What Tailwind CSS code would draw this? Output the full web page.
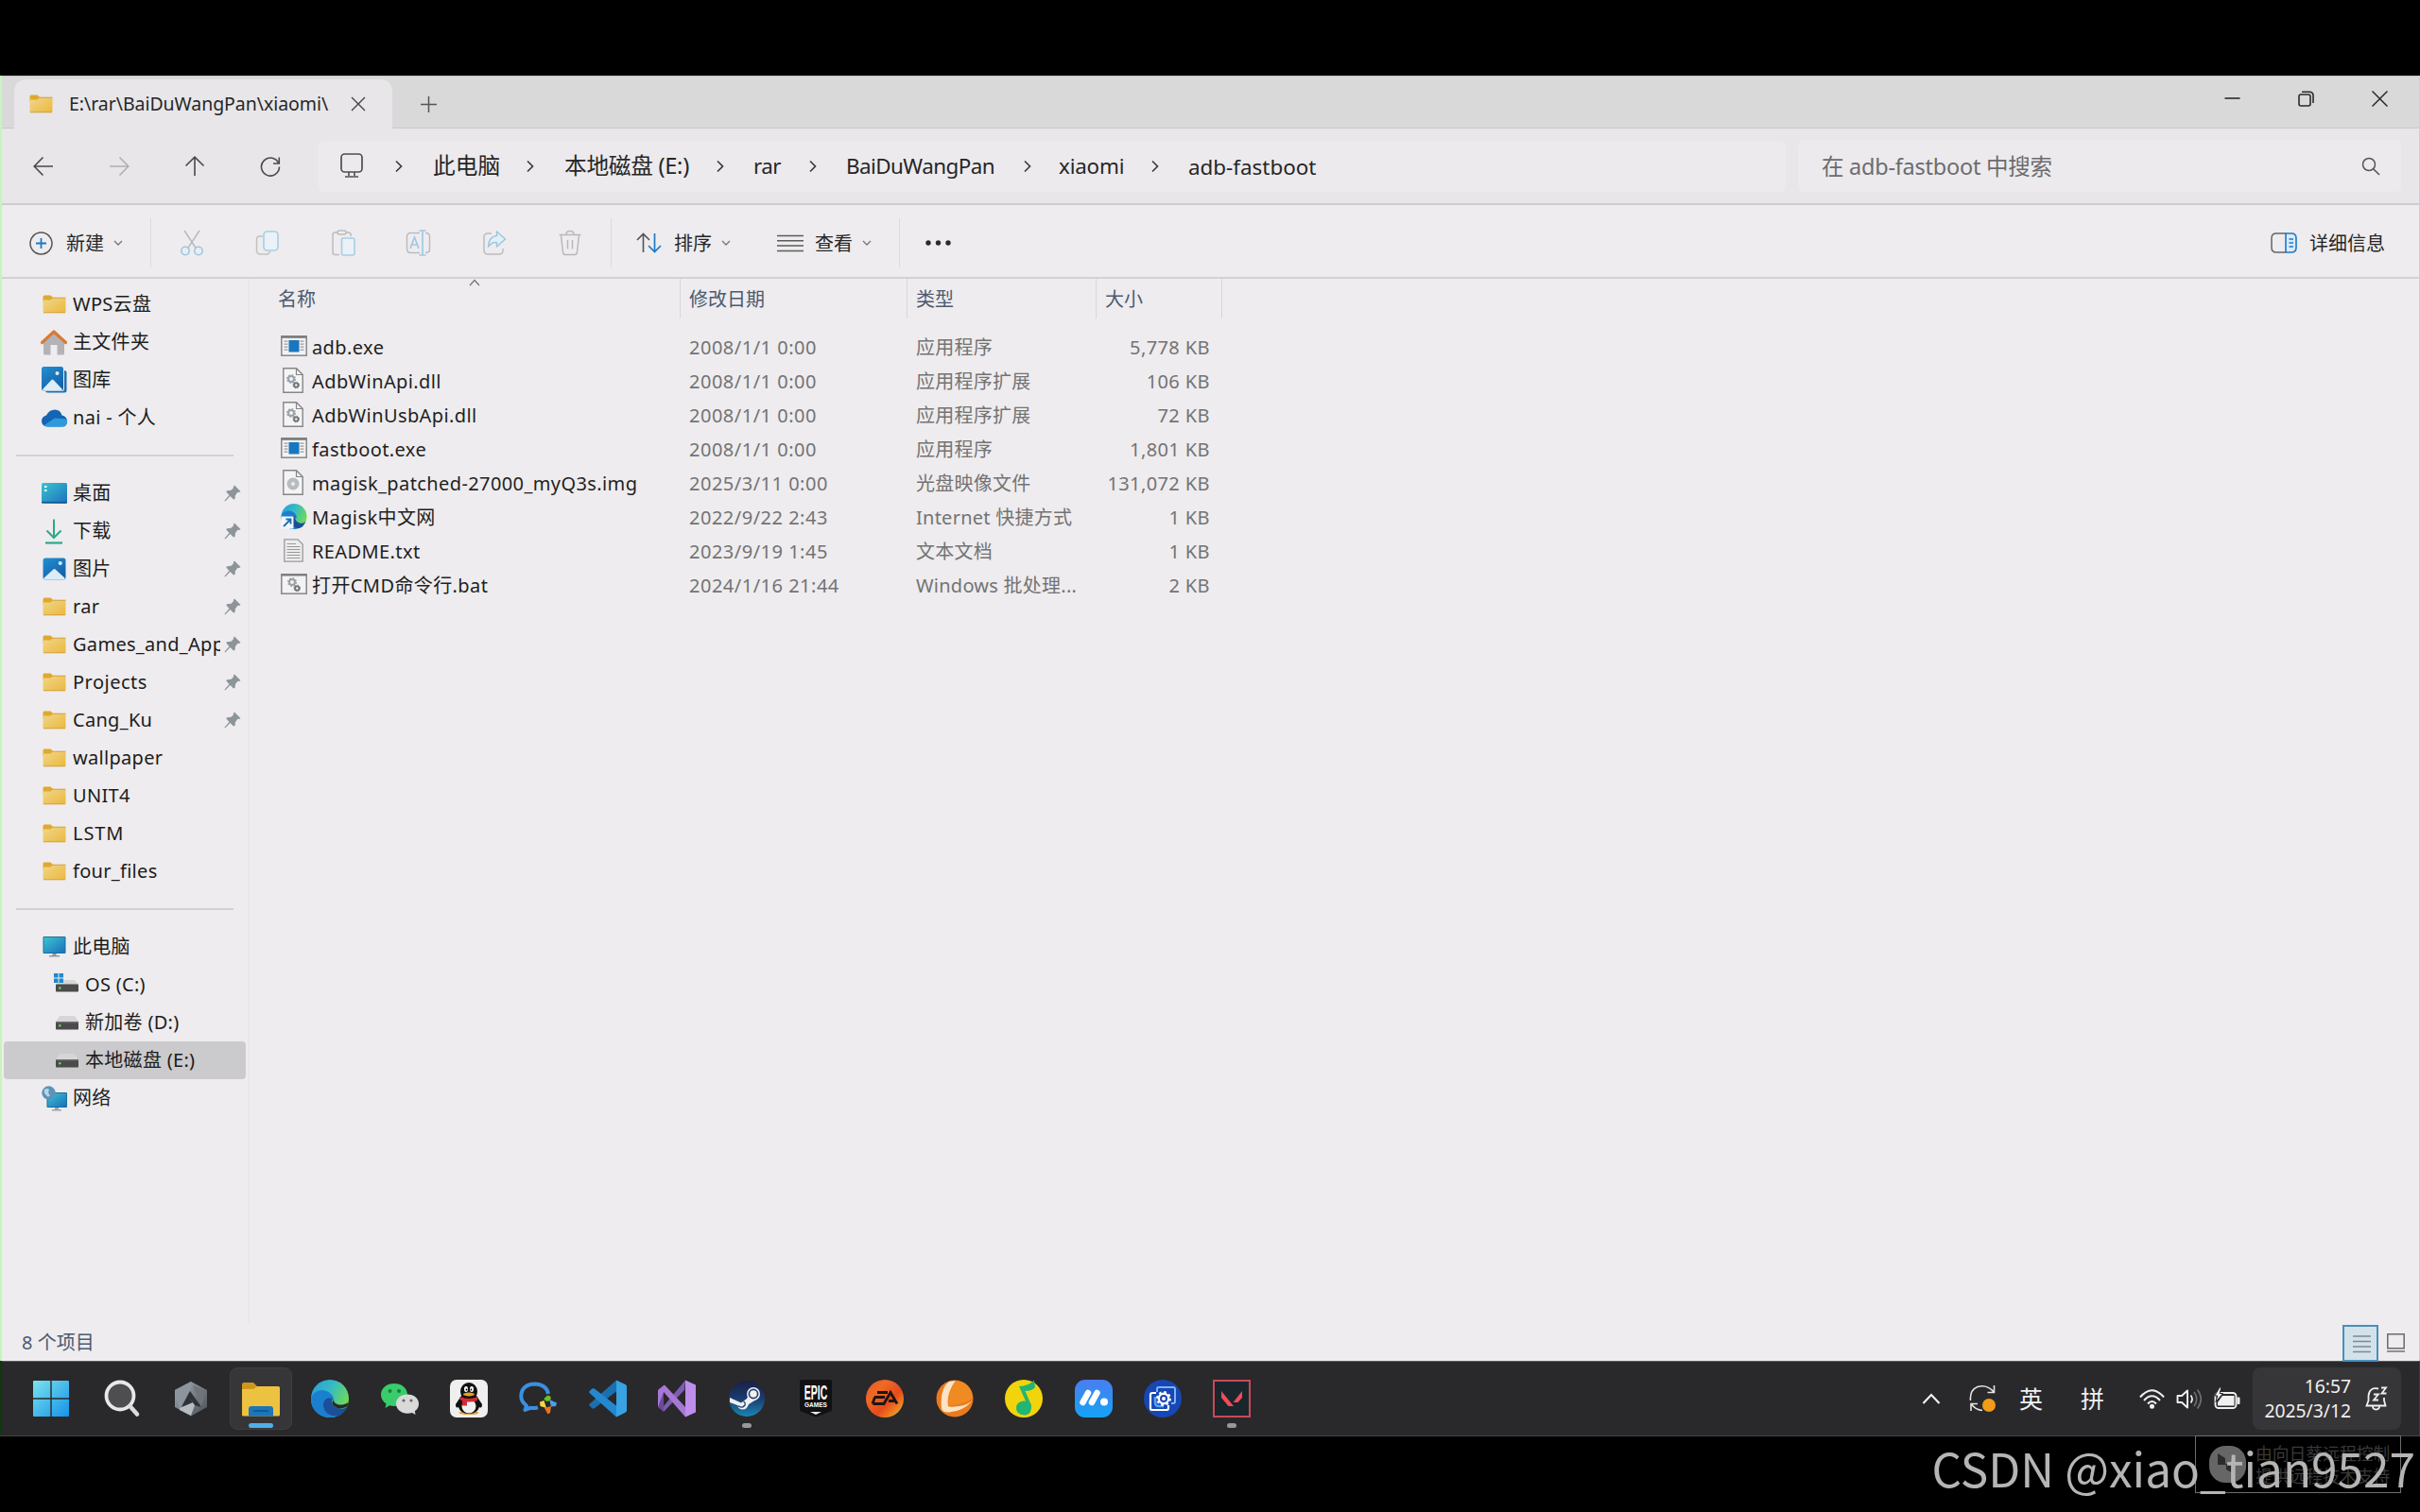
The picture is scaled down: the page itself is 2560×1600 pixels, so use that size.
<!DOCTYPE html>
<html lang="zh-CN">
  <head>
    <meta charset="UTF-8" />
    <title>adb-fastboot</title>
    <script src="https://cdn.jsdelivr.net/npm/@tailwindcss/browser@4"></script>
  </head>
  <body class="bg-black font-['Noto_Sans','Noto_Sans_CJK_SC',sans-serif]">
    <!-- shared icons -->
    <svg class="absolute w-0 h-0">
      <defs>
        <linearGradient id="g-folder" x1="0" y1="0" x2="1" y2="1"><stop offset="0" stop-color="#f0d68c" /><stop offset="1" stop-color="#ebb93c" /></linearGradient>
        <linearGradient id="g-blue" x1="0" y1="0" x2="0.6" y2="1"><stop offset="0" stop-color="#2390d2" /><stop offset="1" stop-color="#1560a8" /></linearGradient>
        <linearGradient id="g-teal" x1="0" y1="0" x2="1" y2="1"><stop offset="0" stop-color="#3cc4d0" /><stop offset="1" stop-color="#1a6fbd" /></linearGradient>
        <linearGradient id="g-win" x1="0" y1="0" x2="1" y2="1"><stop offset="0" stop-color="#7be3ee" /><stop offset="1" stop-color="#1593e8" /></linearGradient>
        <linearGradient id="g-edge" x1="0" y1="0" x2="1" y2="0.5"><stop offset="0" stop-color="#2a9bdc" /><stop offset="0.5" stop-color="#35b9c6" /><stop offset="1" stop-color="#6edb55" /></linearGradient>
        <linearGradient id="g-ea" x1="0" y1="0" x2="1" y2="1"><stop offset="0" stop-color="#e8562a" /><stop offset="0.3" stop-color="#ee6a24" /><stop offset="0.6" stop-color="#e64a1c" /><stop offset="1" stop-color="#f3c02c" /></linearGradient>
        <linearGradient id="g-steam" x1="0" y1="0" x2="0" y2="1"><stop offset="0" stop-color="#1b1f47" /><stop offset="0.5" stop-color="#1a3c6e" /><stop offset="1" stop-color="#1a86b4" /></linearGradient>
        <linearGradient id="g-m" x1="0" y1="0" x2="0" y2="1"><stop offset="0" stop-color="#4a7df0" /><stop offset="1" stop-color="#14a4f4" /></linearGradient>
        <linearGradient id="g-gray" x1="0" y1="0" x2="1" y2="1"><stop offset="0" stop-color="#a3abb2" /><stop offset="1" stop-color="#4a4f55" /></linearGradient>
        <symbol id="folder" viewBox="0 0 24 20">
          <path d="M0 2Q0 0.5 1.5 0.5H8L10.5 3V8H0Z" fill="#dfa92c" />
          <path d="M0 5.5H8L10.5 3H23Q24 3 24 4V18Q24 19 23 19H1Q0 19 0 18Z" fill="url(#g-folder)" />
          <path d="M9.5 3.2H24M0.5 18.8H23.5" stroke="#d29a3a" stroke-width="0.9" />
        </symbol>
        <symbol id="pin" viewBox="0 0 18 18">
          <path d="M11 0.5L17.5 7L16 8L14.5 7.8L12 11L11.5 15L10 15.5L6.5 12L1.5 17.3L0.6 17.3L0.6 16.4L5.5 11L2.3 7.5L3 6.2L7.5 5.8L10 3.3L9.8 2Z" fill="#8d959b" />
        </symbol>
        <symbol id="picture" viewBox="0 0 24 24" preserveAspectRatio="none">
          <rect x="0.5" y="0.5" width="23" height="23" rx="2.5" fill="url(#g-blue)" />
          <path d="M1 22L11 12.5Q12 11.7 13 12.500L23 22Q22 23.500 21 23.500H3Q1.500 23.500 1 22Z" fill="#dcecf8" />
          <circle cx="18" cy="6" r="2" fill="#dcecf8" />
        </symbol>
        <symbol id="drive" viewBox="0 0 24 15">
          <path d="M4 0H20L24 6H0Z" fill="#d6d6d6" />
          <rect x="0" y="6" width="24" height="8.5" rx="0.8" fill="#4b4b4b" />
          <rect x="0" y="6" width="24" height="1.4" fill="#707070" />
          <circle cx="4.3" cy="10.3" r="1.2" fill="#5fe05a" />
        </symbol>
        <symbol id="monitor" viewBox="0 0 24 22">
          <path d="M10 17H14V20H17.5V21.5H6.5V20H10Z" fill="#8c98a0" />
          <rect x="0" y="0" width="24" height="18" rx="1" fill="#1c6f9c" />
          <rect x="1" y="1" width="22" height="16" fill="url(#g-teal)" />
        </symbol>
        <symbol id="exe" viewBox="0 0 28 22">
          <rect x="0.8" y="0.8" width="26.4" height="20.4" fill="#f3f3f3" stroke="#868686" stroke-width="1.5" />
          <path d="M0.8 1.7H27.2" stroke="#7a7a7a" stroke-width="2.2" />
          <path d="M3.5 6.2H7.5M3.5 9.2H7.5M3.5 12.2H7.5M3.5 15.2H7.5M20.5 6.2H24.5M20.5 9.2H24.5M20.5 12.2H24.5M20.5 15.2H24.5" stroke="#9a9a9a" stroke-width="1.2" />
          <rect x="8.5" y="5" width="11" height="12.5" fill="#1977bf" />
        </symbol>
        <symbol id="page" viewBox="0 0 22 27">
          <path d="M0.8 0.8H14.5L21.2 7.5V26.2H0.8Z" fill="#f4f4f4" stroke="#868686" stroke-width="1.4" />
          <path d="M14.5 0.8V7.5H21.2" fill="none" stroke="#868686" stroke-width="1.2" />
        </symbol>
        <symbol id="gears" viewBox="0 0 14 16">
          <circle cx="5" cy="5" r="3" fill="none" stroke="#9aa0a6" stroke-width="2" />
          <circle cx="5" cy="5" r="4.4" fill="none" stroke="#9aa0a6" stroke-width="1.3" stroke-dasharray="1.7 1.75" />
          <circle cx="10.3" cy="11.5" r="2.2" fill="none" stroke="#6c7278" stroke-width="1.8" />
          <circle cx="10.3" cy="11.5" r="3.3" fill="none" stroke="#6c7278" stroke-width="1" stroke-dasharray="1.3 1.3" />
        </symbol>
        <symbol id="edge" viewBox="0 0 40 40">
          <circle cx="20" cy="20" r="20" fill="url(#g-edge)" />
          <path d="M0.2 19C3 11 12 10 17.5 12.5C22 14.6 25 19 24 23C19 16 11 21 13 29C14.5 35.5 21 38.5 27 38.7C22 41 13 40.5 7 35.5C1 30.5 -0.5 24.5 0.2 19Z" fill="#1b7fd0" />
          <path d="M13 29C11.5 21 18 17 22.5 20.5C21 24 23 28 28 30C32 31.5 36 31 38.5 27.5C36 35 31 38.5 27 38.7C20 38.5 14.5 35.5 13 29Z" fill="#1b4f9b" />
        </symbol>
        <symbol id="chev-r" viewBox="0 0 10 16"><path d="M2 2.5L7.5 8L2 13.5" fill="none" stroke="#3c3c3c" stroke-width="1.7" /></symbol>
        <symbol id="chev-d" viewBox="0 0 10 8"><path d="M1 2L5 6L9 2" fill="none" stroke="#777" stroke-width="1.3" /></symbol>
      </defs>
    </svg>

    <div class="relative w-[2560px] h-[1600px] overflow-hidden pt-20">
      <!-- Explorer window -->
      <div class="h-[1360px] bg-[#eeecee] flex flex-col text-[20px] text-[#262626]">
        <!-- Tab strip -->
        <div class="h-[56px] bg-[#d9d9d9] border-t border-[#c4c4c4] flex shrink-0 shadow-[inset_0_-1px_0_#c9c8ca]">
          <div class="ml-[15px] mt-[3px] w-[400px] h-[52px] rounded-t-xl bg-[#e8e6e9] flex items-center pl-4">
            <svg class="w-[25px] h-[20px]"><use href="#folder" /></svg>
            <span class="ml-[17px] w-[287px] text-[19.5px] whitespace-nowrap leading-none tracking-[-0.05px]">E:\rar\BaiDuWangPan\xiaomi\</span>
            <svg class="ml-[11px] w-[16px] h-[16px]" viewBox="0 0 16 16"><path d="M1 1L15 15M15 1L1 15" stroke="#444" stroke-width="1.4" /></svg>
          </div>
          <svg class="ml-[30px] mt-[21px] w-[17px] h-[17px]" viewBox="0 0 17 17"><path d="M8.5 0V17M0 8.5H17" stroke="#555" stroke-width="1.5" /></svg>
          <div class="ml-auto mr-[34px] mt-[14px] h-[18px] flex items-center gap-[61px]">
            <svg class="w-[17px] h-[17px]" viewBox="0 0 17 17"><path d="M0.5 8H16.5" stroke="#2a2a2a" stroke-width="1.6" /></svg>
            <svg class="w-[17px] h-[17px]" viewBox="0 0 17 17"><rect x="1" y="4" width="12" height="12" rx="2" fill="none" stroke="#2a2a2a" stroke-width="1.6" /><path d="M4 1.2H12Q16 1.2 16 5V13" fill="none" stroke="#2a2a2a" stroke-width="1.6" /></svg>
            <svg class="w-[17px] h-[17px]" viewBox="0 0 17 17"><path d="M0.5 0.5L16.5 16.5M16.5 0.5L0.5 16.5" stroke="#2a2a2a" stroke-width="1.5" /></svg>
          </div>
        </div>

        <!-- Navigation + address bar -->
        <div class="h-[81px] bg-[#e8e6e9] border-b-2 border-[#cecdd0] flex items-center shrink-0">
          <div class="w-[337px] flex items-center pl-[35px] pt-px gap-[58px]">
            <svg class="w-[22px] h-[22px]" viewBox="0 0 22 22"><path d="M21 11H1.5M10.5 1.5L1.2 11L10.5 20.5" fill="none" stroke="#4a4a4a" stroke-width="1.6" /></svg>
            <svg class="w-[22px] h-[22px]" viewBox="0 0 22 22"><path d="M1 11H20.5M11.5 1.5L20.8 11L11.5 20.5" fill="none" stroke="#b0afb1" stroke-width="1.6" /></svg>
            <svg class="w-[22px] h-[22px]" viewBox="0 0 22 22"><path d="M11 21V1.5M1.5 10.5L11 1.2L20.5 10.5" fill="none" stroke="#4a4a4a" stroke-width="1.6" /></svg>
            <svg class="w-[22px] h-[22px]" viewBox="0 0 22 22"><path d="M19.8 8A9.5 9.5 0 1 0 20.5 11.5M20.3 1.5V8H14" fill="none" stroke="#4a4a4a" stroke-width="1.6" /></svg>
          </div>
          <div class="w-[1552px] h-[54px] rounded-md bg-[#eceaed] grid grid-cols-[57px_41px_98px_41px_160px_40px_58px_40px_187px_38px_97px_40px_auto] items-center pl-[23px] pt-px text-[22.4px] leading-none whitespace-nowrap">
            <svg class="w-[24px] h-[26px] mt-[-3px]" viewBox="0 0 24 26"><rect x="1" y="1" width="22" height="19" rx="3.5" fill="none" stroke="#4f4f4f" stroke-width="1.7" /><path d="M9 20V24M15 20V24M5 25H19" stroke="#4f4f4f" stroke-width="1.6" /></svg>
            <svg class="w-[10px] h-[16px]"><use href="#chev-r" /></svg>
            <span class="text-[23.7px]">此电脑</span>
            <svg class="w-[10px] h-[16px]"><use href="#chev-r" /></svg>
            <span class="text-[23.7px] tracking-[-0.3px]">本地磁盘 (E:)</span>
            <svg class="w-[10px] h-[16px]"><use href="#chev-r" /></svg>
            <span class="tracking-[-0.5px]">rar</span>
            <svg class="w-[10px] h-[16px]"><use href="#chev-r" /></svg>
            <span class="tracking-[-0.55px]">BaiDuWangPan</span>
            <svg class="w-[10px] h-[16px]"><use href="#chev-r" /></svg>
            <span class="tracking-[-0.2px]">xiaomi</span>
            <svg class="w-[10px] h-[16px]"><use href="#chev-r" /></svg>
            <span class="pt-[2px]">adb-fastboot</span>
          </div>
          <div class="ml-[13px] w-[638px] h-[55px] rounded-md bg-[#eceaed] flex items-center justify-between pl-[25px] pr-[22px] text-[23.5px] leading-none text-[#6c6c6e]">
            <span class="pt-[2px] tracking-[-0.25px]">在 adb-fastboot 中搜索</span>
            <svg class="w-[20px] h-[20px]" viewBox="0 0 20 20"><circle cx="8" cy="8" r="6.5" fill="none" stroke="#555" stroke-width="1.5" /><path d="M12.7 12.7L19 19" stroke="#555" stroke-width="1.6" /></svg>
          </div>
        </div>

        <!-- Command bar -->
        <div class="h-[78px] border-b-2 border-[#d3d1d4] flex items-center shrink-0 leading-none text-[20px] whitespace-nowrap pt-[4px]">
          <div class="w-[159px] flex items-center pl-[31px]">
            <svg class="w-[25px] h-[25px]" viewBox="0 0 25 25"><circle cx="12.5" cy="12.5" r="11.5" fill="none" stroke="#555" stroke-width="1.5" /><path d="M12.5 7V18M7 12.5H18" stroke="#1d79c8" stroke-width="1.8" /></svg>
            <span class="ml-[14px] w-[50px] pt-px">新建</span>
            <svg class="w-[10px] h-[8px]"><use href="#chev-d" /></svg>
          </div>
          <div class="w-[488px] h-[52px] border-x border-[#dcdadd] flex items-center pl-[30px] gap-[53.8px]">
            <svg class="w-[26px] h-[28px] shrink-0" viewBox="0 0 26 28"><path d="M5 1L17.5 20M21 1L8.5 20" stroke="#b9b9bb" stroke-width="1.5" /><circle cx="6" cy="22.5" r="4.2" fill="none" stroke="#9cc7e4" stroke-width="1.6" /><circle cx="20" cy="22.5" r="4.2" fill="none" stroke="#9cc7e4" stroke-width="1.6" /></svg>
            <svg class="w-[26px] h-[28px] shrink-0" viewBox="0 0 26 28"><path d="M8 7H5Q1.5 7 1.5 10.5V22Q1.5 26 5.5 26H12Q15 26 15.5 23" fill="none" stroke="#c2c2c4" stroke-width="1.5" /><rect x="9" y="2" width="15" height="20" rx="3.5" fill="#eaf1f7" stroke="#a8cde6" stroke-width="1.6" /></svg>
            <svg class="w-[26px] h-[28px] shrink-0" viewBox="0 0 26 28"><path d="M9 26.5H4.5Q2 26.5 2 24V5.5Q2 3 4.5 3H18.5Q21 3 21 5.5V7" fill="none" stroke="#bcbcbe" stroke-width="1.5" /><rect x="7" y="1" width="9" height="4" rx="2" fill="#eeecee" stroke="#bcbcbe" stroke-width="1.5" /><rect x="11.5" y="9" width="13.5" height="18" rx="2" fill="#eaf1f7" stroke="#a8cde6" stroke-width="1.6" /></svg>
            <svg class="w-[27px] h-[28px] shrink-0" viewBox="0 0 27 28"><path d="M15 3.5H5.5Q1.5 3.5 1.5 7.5V20.5Q1.5 24.5 5.5 24.5H15M21 3.5Q25.5 3.5 25.5 7.5V20.5Q25.5 24.5 21 24.5" fill="none" stroke="#bcbcbe" stroke-width="1.5" /><path d="M18 1V27M14.5 1H21.5M14.5 27H21.5" stroke="#9cc7e4" stroke-width="1.6" /><path d="M5 20L9.5 8L14 20M6.5 16H12.5" fill="none" stroke="#9cc7e4" stroke-width="1.6" /></svg>
            <svg class="w-[26px] h-[28px] shrink-0" viewBox="0 0 26 28"><path d="M10 4H6Q2 4 2 8V22Q2 26 6 26H18Q22 26 22 22V20" fill="none" stroke="#bcbcbe" stroke-width="1.5" /><path d="M15.5 2L24.5 10L15.5 18V13.5Q10 13 6.5 18Q7 7.5 15.5 6.5Z" fill="#e4eff7" stroke="#9cc7e4" stroke-width="1.5" stroke-linejoin="round" /></svg>
            <svg class="w-[26px] h-[28px] shrink-0" viewBox="0 0 26 28"><path d="M1.5 5.5H24.5M9 5Q9 1.5 13 1.5Q17 1.5 17 5M3.5 6L5.5 24Q6 26.5 8 26.5H18Q20 26.5 20.5 24L22.5 6M10.5 11V20.5M15.5 11V20.5" fill="none" stroke="#b9b9bb" stroke-width="1.5" /></svg>
          </div>
          <div class="w-[305px] h-[52px] border-r border-[#dcdadd] flex items-center pl-[26px]">
            <svg class="w-[27px] h-[22px]" viewBox="0 0 27 22"><path d="M7.5 21V1.5M1 8L7.5 1.5L14 8" fill="none" stroke="#555" stroke-width="1.6" /><path d="M19.5 1V20.5M13 14L19.5 20.5L26 14" fill="none" stroke="#1d79c8" stroke-width="1.7" /></svg>
            <span class="ml-[13px] w-[50px] pt-px">排序</span>
            <svg class="w-[10px] h-[8px]"><use href="#chev-d" /></svg>
            <svg class="ml-[49px] w-[28px] h-[19px]" viewBox="0 0 28 19"><path d="M0 1.5H28M0 6.8H28M0 12.1H28M0 17.4H28" stroke="#5c5c5c" stroke-width="1.5" /></svg>
            <span class="ml-[12px] w-[50px] pt-px">查看</span>
            <svg class="w-[10px] h-[8px]"><use href="#chev-d" /></svg>
          </div>
          <svg class="ml-[26px] w-[30px] h-[6px]" viewBox="0 0 30 6"><circle cx="4" cy="3" r="2.7" fill="#2a2a2a" /><circle cx="14.5" cy="3" r="2.7" fill="#2a2a2a" /><circle cx="25" cy="3" r="2.7" fill="#2a2a2a" /></svg>
          <div class="ml-auto mr-[37px] flex items-center gap-[13px]">
            <svg class="w-[28px] h-[22px]" viewBox="0 0 28 22"><path d="M16 1H6Q1 1 1 6V16Q1 21 6 21H16" fill="none" stroke="#666" stroke-width="1.5" /><path d="M16 1H22Q27 1 27 6V16Q27 21 22 21H16Z" fill="#d9ebf8" stroke="#1d79c8" stroke-width="1.6" /><path d="M19.5 7H24M19.5 11H24M19.5 15H24" stroke="#1d79c8" stroke-width="1.4" /></svg>
            <span class="pt-px">详细信息</span>
          </div>
        </div>

        <!-- Body -->
        <div class="flex flex-1 min-h-0">
          <div class="w-[264px] h-[1107px] border-r border-[#e4e2e5] pt-[7px] shrink-0 leading-none whitespace-nowrap text-[#1c1c1c] tracking-[0.3px]">
            <div class="h-10 flex items-center pl-[45px]"><svg class="w-[25px] h-[20px] mr-[7px]"><use href="#folder" /></svg>WPS云盘</div>
            <div class="h-10 flex items-center pl-[43px]">
              <svg class="w-[28px] h-[27px] mr-[6px]" viewBox="0 0 28 27"><path d="M3 12L14 2L25 12V25Q25 26.5 23.5 26.5H17.5V16H10.5V26.5H4.5Q3 26.5 3 25Z" fill="#b3b3b6" /><path d="M1.5 13.5L14 2L26.5 13.5" fill="none" stroke="#d87a35" stroke-width="3.2" stroke-linejoin="round" stroke-linecap="round" /></svg>主文件夹
            </div>
            <div class="h-10 flex items-center pl-[44px]">
              <svg class="w-[27px] h-[28px] mr-[6px]" viewBox="0 0 27 28"><rect x="4" y="4" width="22.5" height="23.5" rx="2.5" fill="#1f6fae" /><rect x="0" y="0" width="24" height="26" rx="2.5" fill="#eeecee" /><rect x="0" y="0" width="23" height="25.5" rx="2.5" fill="url(#g-blue)" /><path d="M1 24L10.5 14Q11.5 13 12.5 14L22 24Q21.5 25.5 20 25.5H3Q1.5 25.5 1 24Z" fill="#dcecf8" /><circle cx="16.5" cy="7" r="2" fill="#dcecf8" /></svg>图库
            </div>
            <div class="h-10 flex items-center pl-[44px]">
              <svg class="w-[27px] h-[19px] mr-[6px]" viewBox="0 0 27 19"><path d="M6.5 18.5Q0 18 0 12.5Q0 8 5 6.5Q8 0.5 14 0.5Q20 0.5 21.5 6.5Q27 7.5 27 13Q27 18.5 21.5 18.5Z" fill="#1466b4" /><path d="M2.5 17L14 9.5L26.5 10.5Q28 18.5 21.5 18.5H6.5Q4 18.5 2.5 17Z" fill="#2e9ade" /></svg>nai - 个人
            </div>
            <div class="h-10 flex items-center"><div class="ml-[17px] w-[230px] h-[2px] bg-[#d2d0d3]"></div></div>
            <div class="h-10 flex items-center pl-[44px] pr-[8px]">
              <svg class="w-[27px] h-[22px] mr-[6px]" viewBox="0 0 27 22"><rect width="27" height="22" rx="1.5" fill="url(#g-teal)" /><path d="M3 4H5.5M3 8H5.5" stroke="#e8ffff" stroke-width="2" /><path d="M0 20.5H27" stroke="#17588f" stroke-width="1.2" /></svg>桌面
              <svg class="ml-auto w-[18px] h-[18px]"><use href="#pin" /></svg>
            </div>
            <div class="h-10 flex items-center pl-[47px] pr-[8px]">
              <svg class="w-[20px] h-[27px] mr-[10px]" viewBox="0 0 20 27"><path d="M10 0.5V20M2.5 12.5L10 20L17.5 12.5" fill="none" stroke="#2aa98a" stroke-width="2" /><path d="M1 25.5H19" stroke="#2aa98a" stroke-width="2.2" /></svg>下载
              <svg class="ml-auto w-[18px] h-[18px]"><use href="#pin" /></svg>
            </div>
            <div class="h-10 flex items-center pl-[45px] pr-[8px]"><svg class="w-[25px] h-[24px] mr-[7px]"><use href="#picture" /></svg>图片<svg class="ml-auto w-[18px] h-[18px]"><use href="#pin" /></svg></div>
            <div class="h-10 flex items-center pl-[45px] pr-[8px]"><svg class="w-[25px] h-[20px] mr-[7px]"><use href="#folder" /></svg>rar<svg class="ml-auto w-[18px] h-[18px]"><use href="#pin" /></svg></div>
            <div class="h-10 flex items-center pl-[45px] pr-[8px]"><svg class="w-[25px] h-[20px] mr-[7px] shrink-0"><use href="#folder" /></svg><span class="w-[156px] overflow-hidden leading-[30px]">Games_and_Apps</span><svg class="ml-auto w-[18px] h-[18px] shrink-0"><use href="#pin" /></svg></div>
            <div class="h-10 flex items-center pl-[45px] pr-[8px]"><svg class="w-[25px] h-[20px] mr-[7px]"><use href="#folder" /></svg><span class="tracking-[0.5px]">Projects</span><svg class="ml-auto w-[18px] h-[18px]"><use href="#pin" /></svg></div>
            <div class="h-10 flex items-center pl-[45px] pr-[8px]"><svg class="w-[25px] h-[20px] mr-[7px]"><use href="#folder" /></svg>Cang_Ku<svg class="ml-auto w-[18px] h-[18px]"><use href="#pin" /></svg></div>
            <div class="h-10 flex items-center pl-[45px]"><svg class="w-[25px] h-[20px] mr-[7px]"><use href="#folder" /></svg>wallpaper</div>
            <div class="h-10 flex items-center pl-[45px]"><svg class="w-[25px] h-[20px] mr-[7px]"><use href="#folder" /></svg>UNIT4</div>
            <div class="h-10 flex items-center pl-[45px]"><svg class="w-[25px] h-[20px] mr-[7px]"><use href="#folder" /></svg><span class="tracking-[0.9px]">LSTM</span></div>
            <div class="h-10 flex items-center pl-[45px]"><svg class="w-[25px] h-[20px] mr-[7px]"><use href="#folder" /></svg>four_files</div>
            <div class="h-10 flex items-center"><div class="ml-[17px] w-[230px] h-[2px] bg-[#d2d0d3]"></div></div>
            <div class="h-10 flex items-center pl-[45px]"><svg class="w-[25px] h-[22px] mr-[7px]"><use href="#monitor" /></svg>此电脑</div>
            <div class="h-10 flex items-center pl-[57px]">
              <svg class="w-[26px] h-[20px] mr-[7px] mt-[-5px]" viewBox="0 0 26 20"><path d="M6 7H22L26 12H2Z" fill="#d6d6d6" /><rect x="2" y="11.5" width="24" height="8" rx="0.8" fill="#4b4b4b" /><circle cx="6.3" cy="15.5" r="1.2" fill="#5fe05a" /><path d="M0 0H4.5V4.5H0ZM5.5 0H10V4.5H5.5ZM0 5.5H4.5V10H0ZM5.5 5.5H10V10H5.5Z" fill="#2089cc" /></svg>OS (C:)
            </div>
            <div class="h-10 flex items-center pl-[59px]"><svg class="w-[24px] h-[15px] mr-[7px]"><use href="#drive" /></svg>新加卷 (D:)</div>
            <div class="ml-1 w-[256px] h-10 rounded-sm bg-[#cbcacc] flex items-center pl-[55px]"><svg class="w-[24px] h-[15px] mr-[7px]"><use href="#drive" /></svg>本地磁盘 (E:)</div>
            <div class="h-10 flex items-center pl-[44px]">
              <svg class="w-[27px] h-[27px] mr-[6px]" viewBox="0 0 27 27"><path d="M14 22H18V25H21V26.5H11V25H14Z" fill="#9aa4ab" /><rect x="5.5" y="7" width="21.5" height="16" rx="1" fill="#1c6f9c" /><rect x="6.5" y="8" width="19.5" height="14" fill="url(#g-teal)" /><circle cx="7.5" cy="7.5" r="7.2" fill="#5a94b8" /><path d="M3 4Q6 2 8 4Q6 8 9 10Q7 13 5 10Q2 8 3 4Z" fill="#b9d4e2" /></svg>网络
            </div>
          </div>

          <!-- File list -->
          <div class="flex-1 relative leading-none whitespace-nowrap">
            <svg class="absolute left-[232px] top-0 w-[12px] h-[8px]" viewBox="0 0 12 8"><path d="M1 7L6 1.5L11 7" fill="none" stroke="#777" stroke-width="1.3" /></svg>
            <div class="h-[42px] flex text-[#4c5a70]">
              <div class="w-[456px] border-r border-[#d8d6d9] flex items-center pl-[30px] pt-[2px]">名称</div>
              <div class="w-[240px] border-r border-[#d8d6d9] flex items-center pl-[9px] pt-[2px]">修改日期</div>
              <div class="w-[200px] border-r border-[#d8d6d9] flex items-center pl-[9px] pt-[2px]">类型</div>
              <div class="w-[133px] border-r border-[#d8d6d9] flex items-center pl-[9px] pt-[2px]">大小</div>
            </div>
            <div id="files" class="pt-[13px] pl-[33px] text-[#737374]"></div>
          </div>
        </div>

        <!-- Status bar -->
        <div class="h-[38px] flex items-center pl-[23px] pr-[16px] leading-none text-[#4c5a70] shrink-0 mt-[-38px]">
          <span>8 个项目</span>
          <div class="ml-auto w-[38px] h-[39px] border-2 border-[#4a8fbd] bg-[#d3e2ea] flex items-center justify-center">
            <svg class="w-[19px] h-[19px] mt-[3px] ml-[2px]" viewBox="0 0 19 19"><path d="M0 1H19M0 6.5H19M0 12H19M0 17.5H19" stroke="#7a8a90" stroke-width="1.5" /></svg>
          </div>
          <svg class="ml-[9px] w-[19px] h-[20px]" viewBox="0 0 19 20"><rect x="0.8" y="0.8" width="17.4" height="15" fill="none" stroke="#6a6a6a" stroke-width="1.5" /><path d="M0 19H19" stroke="#6a6a6a" stroke-width="1.4" /></svg>
        </div>
      </div>

      <!-- Taskbar -->
      <div class="h-[80px] bg-[#29282b] border-t border-[#5c5b5e] border-b border-b-[#444346] flex items-center">
        <div class="pl-[19px] flex items-center">
          <div class="w-[73.4px] flex justify-center">
            <svg class="w-10 h-10 mr-[3px]" viewBox="0 0 40 40"><path d="M1 2Q1 1 2 1H19.3V19.3H1ZM20.7 1H38Q39 1 39 2V19.3H20.7ZM1 20.7H19.3V39H2Q1 39 1 38ZM20.7 20.7H39V38Q39 39 38 39H20.7Z" fill="url(#g-win)" /></svg>
          </div>
          <div class="w-[73.4px] flex justify-center">
            <svg class="w-10 h-10" viewBox="0 0 40 40"><circle cx="18" cy="17" r="14.5" fill="#4e4d50" stroke="#e8e8e8" stroke-width="3.8" /><path d="M28.5 28L36 36.5" stroke="#dcdcdc" stroke-width="4.5" stroke-linecap="round" /></svg>
          </div>
          <div class="w-[73.4px] flex justify-center">
            <svg class="w-10 h-10" viewBox="0 0 40 40"><path d="M20 2L37 11V29L20 38.5L3 29V11Z" fill="url(#g-gray)" /><path d="M20 2L3 11L8 31L20 9Z" fill="#8c959d" /><path d="M19 12L10 29L20 26L31 29Z" fill="#2e3135" /><path d="M8 30L22 24L18 19L24 27L20 38L8 32Z" fill="#b5bcc2" /><path d="M22 6L35 12L31 29Z" fill="#6d747b" /></svg>
          </div>
          <div class="w-[73.4px] flex justify-center">
            <div class="w-[66px] h-[66px] rounded-lg bg-[#363538] border border-[#3e3d40] flex flex-col items-center">
              <svg class="w-10 h-[38px] mt-[14px]" viewBox="0 0 40 38"><path d="M0 3Q0 1 2 1H12L16 5V12H0Z" fill="#cf961d" /><path d="M0 8H12L16 5H38.5Q40 5 40 6.5V35Q40 36.5 38.5 36.5H1.5Q0 36.5 0 35Z" fill="#edc240" /><path d="M7 36.5V29Q7 26 10 26H30Q33 26 33 29V36.5Z" fill="#1c76b8" /><path d="M12 31H28" stroke="#135a94" stroke-width="1.8" /></svg>
              <div class="mt-[6px] w-[26px] h-[5px] rounded-full bg-[#4fb0e8]"></div>
            </div>
          </div>
          <div class="w-[73.4px] flex justify-center">
            <svg class="w-10 h-10" viewBox="0 0 40 40"><use href="#edge" width="40" height="40" /><path d="M24 22C25 26.5 32 28.5 39.5 24L38.500 27.800C34 31.500 29 31 26 29C22 26.500 21.500 22.500 24 22Z" fill="#29282b" /></svg>
          </div>
          <div class="w-[73.4px] flex justify-center">
            <svg class="w-10 h-10" viewBox="0 0 40 40"><path d="M14 4C21.5 4 28 8.5 28 16C28 23.5 21.5 28 14 28Q11.5 28 9 27.3L4.5 30L5.5 25.5C2 23 0 20 0 16C0 8.5 6.5 4 14 4Z" fill="#38cd6a" /><circle cx="9.5" cy="12" r="2" fill="#1c7c3d" /><circle cx="19" cy="12" r="2" fill="#1c7c3d" /><path d="M28 15.5C34.5 15.5 40 19.5 40 25.5C40 29 38.5 31.5 35.8 33.3L36.5 37L33 35Q30.5 35.7 28 35.7C21.5 35.7 16 31.5 16 25.5C16 19.5 21.5 15.5 28 15.5Z" fill="#d9d9d9" /><circle cx="24" cy="22" r="1.6" fill="#6a6a6a" /><circle cx="32" cy="22" r="1.6" fill="#6a6a6a" /></svg>
          </div>
          <div class="w-[73.4px] flex justify-center">
            <svg class="w-10 h-10" viewBox="0 0 40 40"><rect width="40" height="40" rx="7" fill="#f0eff0" /><ellipse cx="20" cy="35" rx="10.5" ry="2" fill="#e0a23a" /><path d="M12 17L6 26Q6 31 9 29Q11 36 20 36Q29 36 31 29Q34 31 34 26L28 17Z" fill="#111" /><ellipse cx="20" cy="28" rx="7.5" ry="7.5" fill="#f0eff0" /><ellipse cx="20" cy="12.5" rx="9" ry="9.5" fill="#111" /><ellipse cx="17" cy="10" rx="2" ry="3" fill="#fff" /><ellipse cx="23" cy="10" rx="2" ry="3" fill="#fff" /><circle cx="17.5" cy="10.5" r="0.9" /><circle cx="22.5" cy="10.5" r="0.9" /><ellipse cx="20" cy="15.5" rx="6" ry="1.9" fill="#e8a02a" /><path d="M10.500 18Q20 22 29.500 18L29 22Q24 24 18 23.500V27.500H13V22.500L10.500 21Z" fill="#d42a36" /></svg>
          </div>
          <div class="w-[73.4px] flex justify-center">
            <svg class="w-10 h-10" viewBox="0 0 40 40"><path d="M31 15Q29 5 17 4.500Q3 5 2.300 17Q2 23 8 27.500L6.500 32L12 29.800Q15 30.500 20 29.500" fill="none" stroke="#3a8fdf" stroke-width="4" stroke-linejoin="round" /><path d="M31 18L37.500 25.500L31 33L24 26Z" fill="#29282b" /><path d="M26 20L31 17L33 22L29 23Z" fill="#6cc024" /><circle cx="31" cy="19.500" r="2.700" fill="#6cc024" /><path d="M32 21L40 24.500L39 28L34 28.500Z" fill="#4aa0e6" /><path d="M27 30L34 28L33 35L30.500 36.500Z" fill="#ee7320" /><path d="M22 23.500L26.500 22L29 30L22.500 28Z" fill="#f0d93c" /><circle cx="30.500" cy="25.500" r="2.500" fill="#29282b" /></svg>
          </div>
          <div class="w-[73.4px] flex justify-center">
            <svg class="w-10 h-10" viewBox="0 0 40 40"><path d="M29 0.5L0.8 25.5Q-0.3 26.700 0.800 28L3.500 30.300Q4.500 31 5.800 30.200L29.500 12Z" fill="#1b6fae" /><path d="M29 39.500L0.800 14.300Q-0.300 13 0.800 11.800L3.500 9.500Q4.500 8.800 5.800 9.600L29.500 28Z" fill="#2389cf" /><path d="M29 0.500L38.500 5Q40 5.700 40 7.300V32.500Q40 34 38.500 34.800L29 39.500Z" fill="#37a3e4" /></svg>
          </div>
          <div class="w-[73.4px] flex justify-center">
            <svg class="w-10 h-10" viewBox="0 0 40 40"><path d="M0 11L6 6V34L0 29Z" fill="#6a4a98" /><path d="M6 34L28 11L29 0.500L6 28Z" fill="#7e5cb0" /><path d="M0 11L7 5.500L29 29V39.500L6 13L0 29Z" fill="#a678d6" /><path d="M29 0.500L40 5.500V34.500L29 39.500Z" fill="#be8eea" /></svg>
          </div>
          <div class="w-[73.4px] flex flex-col items-center relative">
            <svg class="w-10 h-10" viewBox="0 0 40 40"><circle cx="20" cy="20" r="19" fill="url(#g-steam)" /><path d="M2 19L14 24.500L20 20L26 10L33 12L30 21L22 26Q20 32 15 31.500Q11 31 10 27L2 24Z" fill="#f0f0f2" /><circle cx="27" cy="15" r="7" fill="#f0f0f2" /><circle cx="27" cy="15" r="4.600" fill="#f0f0f2" stroke="#26406c" stroke-width="1.700" /><path d="M10.500 27.500Q15 31 18 27Q19 23.500 15.500 22.500" fill="none" stroke="#26406c" stroke-width="1.300" /></svg>
            <div class="absolute top-[46px] w-[10px] h-[5px] rounded-full bg-[#98979a]"></div>
          </div>
          <div class="w-[73.4px] flex justify-center">
            <div class="relative w-[34px] h-10 text-white text-center">
              <svg class="w-[34px] h-10" viewBox="0 0 34 40"><path d="M2 0H32Q34 0 34 2V33L17 39.500L0 33V2Q0 0 2 0Z" fill="#111113" /><path d="M11 34H23L17 37Z" fill="#e8e8e8" /></svg>
              <span class="absolute left-[-10px] top-[4px] w-[54px] scale-x-[0.58] scale-y-[1.25] text-[18px] leading-[18px] font-bold font-['Liberation_Sans',sans-serif]">EPIC</span>
              <span class="absolute left-[-3px] top-[22px] w-[40px] text-[6.5px] leading-[9px] font-bold font-['Liberation_Sans',sans-serif]">GAMES</span>
            </div>
          </div>
          <div class="w-[73.4px] flex justify-center">
            <svg class="w-10 h-10" viewBox="0 0 40 40"><circle cx="20" cy="20" r="20" fill="url(#g-ea)" /><path d="M12 13.500H23M9 18.500H20M7.500 25.500H19L26 13.500L33 25.500M9.500 18.500L7 25.500M24 22.500H31" fill="none" stroke="#1d1512" stroke-width="2.800" /></svg>
          </div>
          <div class="w-[73.4px] flex justify-center">
            <svg class="w-10 h-10" viewBox="0 0 40 40"><circle cx="20" cy="20" r="19.500" fill="#ea7a1c" /><path d="M14 2Q4 9 6 31Q8 35 14 34.500Q30 33 38.500 22Q33 27 24 28Q15 29.500 13 28Q11 14 21 1Z" fill="#fbe3c4" /><path d="M21 1Q12 14 13.500 27Q26 28 38.500 20Q38 3 21 1Z" fill="#f08a22" /></svg>
          </div>
          <div class="w-[73.4px] flex justify-center">
            <svg class="w-10 h-10" viewBox="0 0 40 40"><circle cx="20" cy="20" r="20" fill="#f2d40c" /><path d="M15 7Q25 7 31 0.500L32 8Q29 12 21.500 12L28 27Q29 37 20.500 37.500Q12 37 12 30Q12 23 20 22.500L22 22.700L15 7Z" fill="#22b573" /></svg>
          </div>
          <div class="w-[73.4px] flex justify-center">
            <svg class="w-10 h-10" viewBox="0 0 40 40"><rect width="40" height="40" rx="11" fill="url(#g-m)" /><path d="M8.500 24L14 14M18 24L23.500 14" stroke="#fff" stroke-width="6.500" stroke-linecap="round" /><circle cx="31" cy="23.500" r="4" fill="#fff" /></svg>
          </div>
          <div class="w-[73.4px] flex justify-center">
            <svg class="w-10 h-10" viewBox="0 0 40 40"><circle cx="20" cy="20" r="20" fill="#1747b4" /><path d="M14 13V9.500Q14 8 15.500 8H31Q33 8 33 10V23Q33 25 31 25H29" fill="none" stroke="#7fb4f6" stroke-width="2" /><path d="M26 27V30Q26 32 24 32H9Q7 32 7 30V16Q7 14 9 14H13" fill="none" stroke="#fff" stroke-width="2.200" /><path d="M12 18V24Q12 28 16 28H21" fill="none" stroke="#5aa2f4" stroke-width="2.500" /><circle cx="21" cy="20" r="5.200" fill="none" stroke="#fff" stroke-width="2.400" /><circle cx="21" cy="20" r="7" fill="none" stroke="#fff" stroke-width="1.800" stroke-dasharray="2.750 2.750" /><circle cx="21" cy="20" r="2" fill="#fff" /></svg>
          </div>
          <div class="w-[73.4px] flex flex-col items-center relative">
            <svg class="w-10 h-10" viewBox="0 0 40 40"><rect x="1" y="1" width="38" height="38" fill="#1b252c" stroke="#c84a56" stroke-width="2" /><path d="M9 12L22 28H16.500L9 19ZM31 12V19L26.500 24H21.500Z" fill="#ef4c5a" /></svg>
            <div class="absolute top-[46px] w-[10px] h-[5px] rounded-full bg-[#98979a]"></div>
          </div>
        </div>

        <!-- System tray -->
        <div class="ml-auto mr-5 flex items-center text-[#f0f0f0]">
          <svg class="w-[20px] h-[12px]" viewBox="0 0 20 12"><path d="M1.500 11L10 2L18.500 11" fill="none" stroke="#f0f0f0" stroke-width="2.200" /></svg>
          <svg class="ml-[30px] w-[28px] h-[30px]" viewBox="0 0 28 30"><path d="M1.500 17Q0.500 6 9 2.500Q19 -0.500 26 8M26.500 1V8.500H19.500M2 28V20.500H9M2.500 21Q7 27 14 27.500" fill="none" stroke="#e4e4e4" stroke-width="1.600" /><circle cx="21" cy="22" r="7" fill="#f09c18" /></svg>
          <span class="ml-[25px] w-[65px] text-[25px] leading-none">英</span>
          <span class="w-[62px] text-[25px] leading-none">拼</span>
          <svg class="w-[27px] h-[21px]" viewBox="0 0 27 21"><path d="M1 8.500Q13.500 -6 26 8.500M5 12Q13.500 2.500 22 12M9 15.500Q13.500 10.500 18 15.500" fill="none" stroke="#f0f0f0" stroke-width="2" /><circle cx="13.500" cy="18.300" r="2.500" fill="#f0f0f0" /></svg>
          <svg class="ml-[12px] w-[28px] h-[23px]" viewBox="0 0 28 23"><path d="M1.500 8V15H6L12 20.500V2.500L6 8Z" fill="none" stroke="#f0f0f0" stroke-width="1.900" stroke-linejoin="round" /><path d="M15.500 7.500Q18.500 11.500 15.500 15.500" fill="none" stroke="#f0f0f0" stroke-width="1.700" /><path d="M19 4Q24.500 11.500 19 19M22.500 1.500Q30 11.500 22.500 21.500" fill="none" stroke="#6c6b6e" stroke-width="1.700" /></svg>
          <svg class="ml-[12px] w-[28px] h-[24px]" viewBox="0 0 28 24"><rect x="1.500" y="6" width="22" height="16" rx="3.500" fill="none" stroke="#f0f0f0" stroke-width="1.900" /><path d="M9 9H21.500V19.500H4V16Z" fill="#f0f0f0" /><path d="M25 11V17.500H27V11Z" fill="#f0f0f0" stroke="#f0f0f0" /><path d="M6 0L0.800 9H3.800L2 15.500L9.500 6.500H6L8 0Z" fill="#f0f0f0" stroke="#29282b" stroke-width="1" /></svg>
          <div class="ml-[13px] w-[157px] h-[66px] rounded-lg bg-[#363538] flex items-center justify-end pr-[14px]">
            <div class="text-right text-[19.3px] leading-[26px] pb-px">
              <div>16:57</div>
              <div>2025/3/12</div>
            </div>
            <svg class="ml-[15px] w-[24px] h-[26px]" viewBox="0 0 24 26"><path d="M14 2.500Q4.500 0.500 3.500 10V15L1.500 20.500H21.500L20 15V12M8 21Q8 24.500 11.500 24.500Q15 24.500 15 21" fill="none" stroke="#f0f0f0" stroke-width="1.800" /><path d="M9 8.500H14L9 14.500H14M17 1.500H22L17.500 7.500H22.500" fill="none" stroke="#f0f0f0" stroke-width="1.800" /></svg>
          </div>
        </div>
      </div>

      <!-- Remote control badge and watermark over the bottom letterbox -->
      <div class="absolute left-[2322px] top-[1519px] w-[218px] h-[61px] border border-[#6e6e6e] flex items-center pl-[14px] text-[#3a3a3a]">
        <svg class="w-[39px] h-[39px]" viewBox="0 0 39 39"><rect width="39" height="39" rx="17" fill="#666" /><path d="M9 8L17 13V19H27V30L18 25V20H9Z" fill="#2c2c2c" /></svg>
        <div class="ml-[10px] text-[17.8px] leading-[24px] whitespace-nowrap">
          <div>由向日葵远程控制</div>
          <div>提供远程技术支持</div>
        </div>
      </div>
      <div class="absolute right-[5px] top-[1523px] text-[49.5px] leading-[60px] whitespace-nowrap text-[#b5b5b5] font-['Noto_Sans_CJK_SC',sans-serif]">CSDN @xiao_tian9527</div>

      <!-- stream edge lines -->
      <div class="absolute left-0 top-20 w-[2px] h-[1360px] bg-[#c4f5bd]"></div>
      <div class="absolute left-0 top-[1440px] w-[2px] h-[79px] bg-[#0d3a0d]"></div>
      <div class="absolute right-0 top-20 w-px h-[1360px] bg-[#a9ee9c]"></div>
      <div class="absolute right-0 top-[1440px] w-px h-[79px] bg-[#0f5a0f]"></div>
    </div>

    <script>
      const icons = {
        exe: `<svg class="w-[28px] h-[22px] mt-[-4px]"><use href="#exe" /></svg>`,
        dll: `<svg class="ml-[2px] mr-[4px] w-[22px] h-[27px] mt-[-3px]" viewBox="0 0 22 27"><use href="#page" width="22" height="27" /><use href="#gears" x="4" y="7" width="14" height="16" /></svg>`,
        img: `<svg class="ml-[2px] mr-[4px] w-[22px] h-[27px] mt-[-3px]" viewBox="0 0 22 27"><use href="#page" width="22" height="27" /><circle cx="11" cy="15" r="6.5" fill="#b9bcbf" /><circle cx="11" cy="15" r="2" fill="#eee" /></svg>`,
        url: `<svg class="w-[28px] h-[27px] mt-[-3px]" viewBox="0 0 28 27"><use href="#edge" x="0" y="0" width="28" height="27" /><rect x="0.5" y="13.5" width="13" height="13" fill="#f2f6fa" /><path d="M3 24L10 17M5.5 16.5H10.5V21.5" fill="none" stroke="#1d6fb8" stroke-width="1.8" /></svg>`,
        txt: `<svg class="ml-[3px] mr-[4px] w-[21px] h-[25px] mt-[-4px]" viewBox="0 0 21 25"><path d="M0.8 0.8H15L20.2 6V24.2H0.8Z" fill="#ececec" stroke="#9a9a9a" stroke-width="1.3" /><path d="M3.5 5.5H13M3.5 8.5H17.5M3.5 11.5H17.5M3.5 14.5H17.5M3.5 17.5H17.5M3.5 20.5H17.5" stroke="#9a9a9a" stroke-width="1.2" /></svg>`,
        bat: `<svg class="w-[28px] h-[22px] mt-[-4px]" viewBox="0 0 28 22"><rect x="0.8" y="0.8" width="26.4" height="20.4" fill="#f3f3f3" stroke="#868686" stroke-width="1.5" /><path d="M0.8 1.5H27.2" stroke="#7a7a7a" stroke-width="2" /><use href="#gears" x="7" y="4" width="14" height="16" /></svg>`,
      };
      const files = [
        ["exe", "adb.exe", "2008/1/1 0:00", "应用程序", "5,778 KB"],
        ["dll", "AdbWinApi.dll", "2008/1/1 0:00", "应用程序扩展", "106 KB"],
        ["dll", "AdbWinUsbApi.dll", "2008/1/1 0:00", "应用程序扩展", "72 KB"],
        ["exe", "fastboot.exe", "2008/1/1 0:00", "应用程序", "1,801 KB"],
        ["img", "magisk_patched-27000_myQ3s.img", "2025/3/11 0:00", "光盘映像文件", "131,072 KB"],
        ["url", "Magisk中文网", "2022/9/22 2:43", "Internet 快捷方式", "1 KB"],
        ["txt", "README.txt", "2023/9/19 1:45", "文本文档", "1 KB"],
        ["bat", "打开CMD命令行.bat", "2024/1/16 21:44", "Windows 批处理...", "2 KB"],
      ];
      document.getElementById("files").innerHTML = files
        .map(
          ([icon, name, date, type, size]) => `
        <div class="h-9 grid grid-cols-[432px_240px_200px_111px] items-center">
          <div class="flex items-center text-[#1f1f1f]">${icons[icon]}<span class="ml-[5px] tracking-[0.4px]">${name}</span></div>
          <div class="tracking-[0.5px]">${date}</div>
          <div class="tracking-[0.25px]">${type}</div>
          <div class="text-right tracking-[0.4px]">${size}</div>
        </div>`
        )
        .join("");
    </script>
  </body>
</html>
